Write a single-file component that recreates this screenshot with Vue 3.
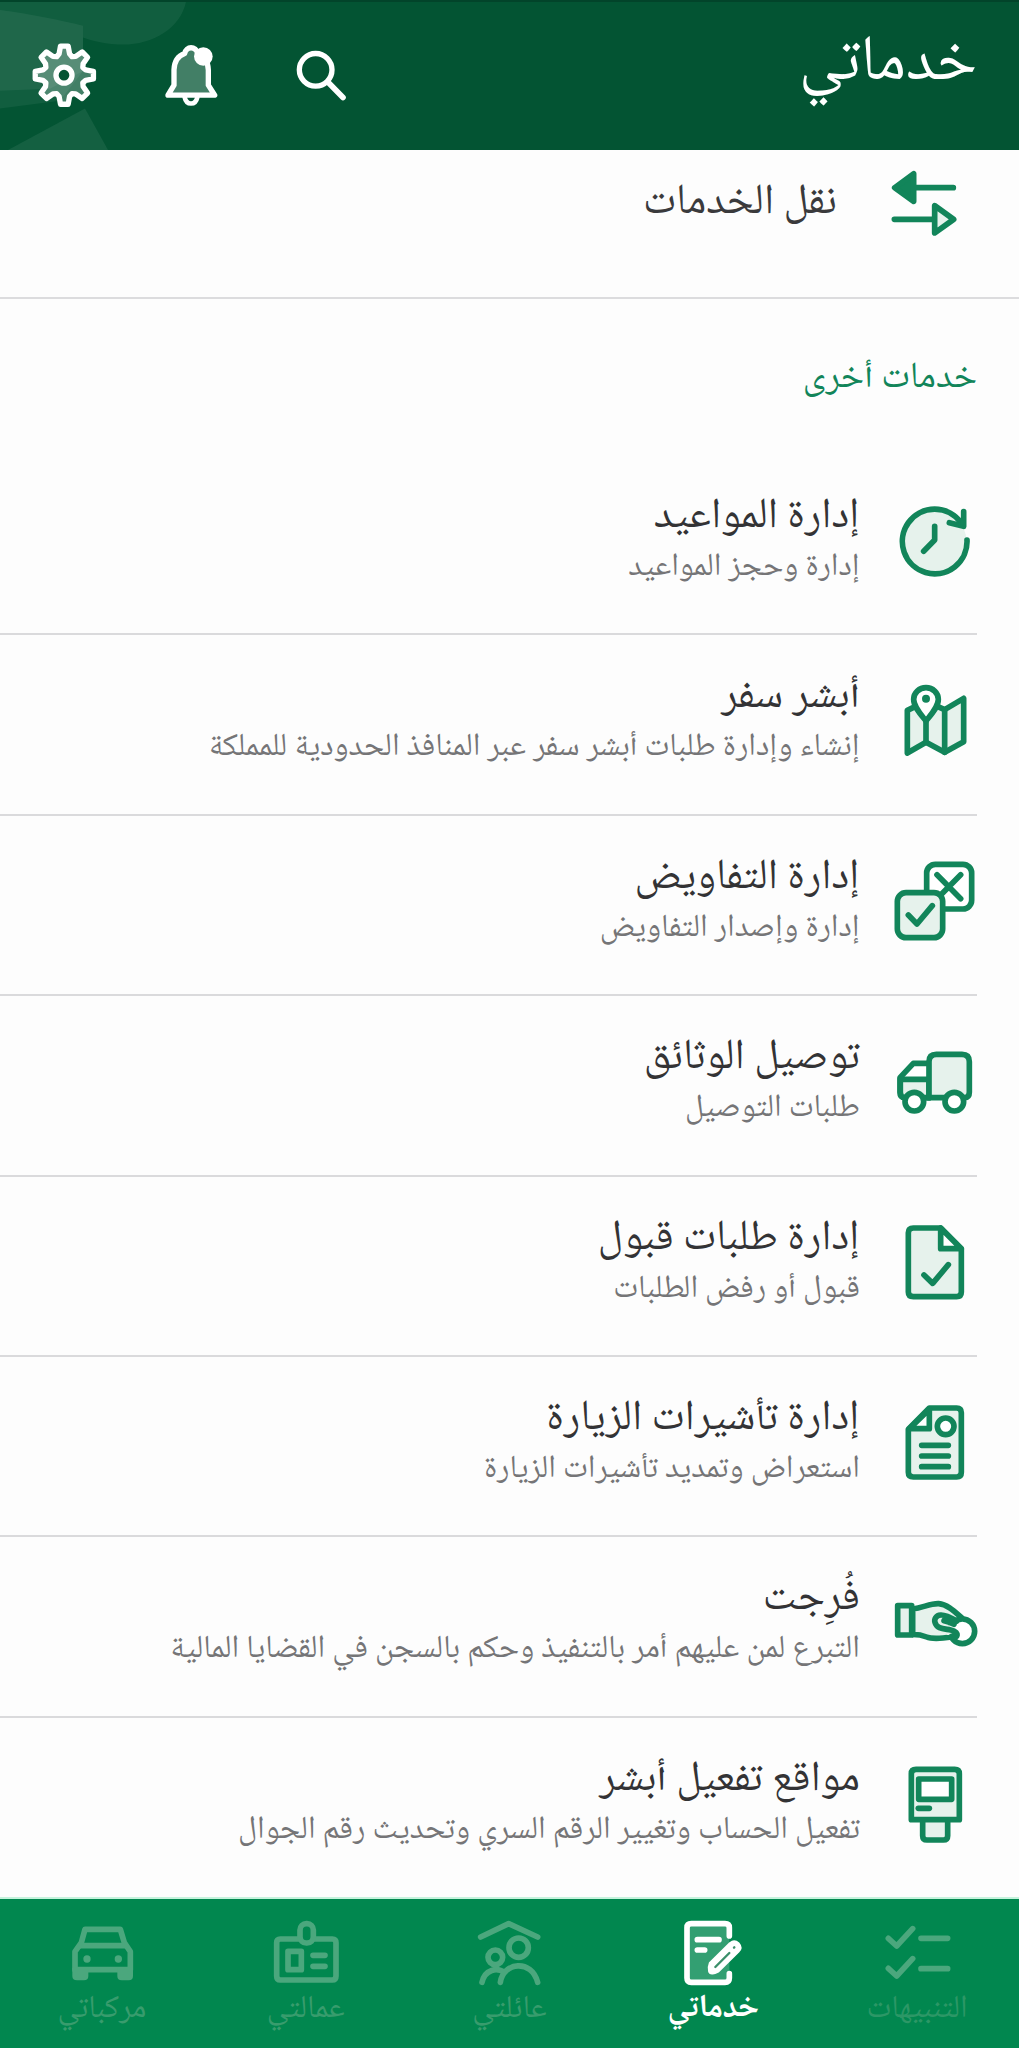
<template>
  <div class="app" dir="rtl">
    <header class="topbar">
      <svg class="topbar-pattern" viewBox="0 0 400 150" preserveAspectRatio="none">
        <path d="M0 0H186C180 28 150 45 118 43 100 42 88 38 83 36V70L60 100 0 108Z" fill="#fff" opacity=".06" />
        <path d="M0 8C30 12 60 18 83 24V70L50 88 0 90Z" fill="#fff" opacity=".06" />
        <path d="M8 150L85 108 108 150Z" fill="#fff" opacity=".07" />
      </svg>
      <h1>خدماتي</h1>
      <div class="topbar-actions">
        <svg viewBox="855 110 180 230" class="ic-action" v-html="icons.search"></svg>
        <svg viewBox="481 110 180 230" class="ic-action" v-html="icons.bell"></svg>
        <svg viewBox="99 110 180 230" class="ic-action" v-html="icons.gear"></svg>
      </div>
    </header>

    <main>
      <section class="transfer">
        <svg class="transfer-icon" viewBox="770 470 270 270" v-html="icons.transfer"></svg>
        <span>نقل الخدمات</span>
      </section>

      <h2>خدمات أخرى</h2>

      <ul class="services">
        <li v-for="s in services" :key="s.title">
          <svg class="service-icon" :viewBox="s.box" v-html="icons[s.icon]"></svg>
          <div class="service-text">
            <h3>{{ s.title }}</h3>
            <p>{{ s.desc }}</p>
          </div>
        </li>
      </ul>
    </main>

    <nav class="tabs">
      <a v-for="t in tabs" :key="t.label" class="tab" :class="{ active: t.active, dim: t.dim }">
        <svg :viewBox="t.box" v-html="icons[t.icon]"></svg>
        <span>{{ t.label }}</span>
      </a>
    </nav>
  </div>
</template>

<script setup>
const services = [
  { icon: 'clock', box: '870 108 270 270', title: 'إدارة المواعيد', desc: 'إدارة وحجز المواعيد' },
  { icon: 'map', box: '870 649 270 270', title: 'أبشر سفر', desc: 'إنشاء وإدارة طلبات أبشر سفر عبر المنافذ الحدودية للمملكة' },
  { icon: 'boxes', box: '900 110 270 270', title: 'إدارة التفاويض', desc: 'إدارة وإصدار التفاويض' },
  { icon: 'truck', box: '900 652 270 270', title: 'توصيل الوثائق', desc: 'طلبات التوصيل' },
  { icon: 'docCheck', box: '900 113 270 270', title: 'إدارة طلبات قبول', desc: 'قبول أو رفض الطلبات' },
  { icon: 'visa', box: '900 654 270 270', title: 'إدارة تأشيرات الزيارة', desc: 'استعراض وتمديد تأشيرات الزيارة' },
  { icon: 'hand', box: '900 115 270 270', title: 'فُرِجت', desc: 'التبرع لمن عليهم أمر بالتنفيذ وحكم بالسجن في القضايا المالية' },
  { icon: 'kiosk', box: '900 656 270 270', title: 'مواقع تفعيل أبشر', desc: 'تفعيل الحساب وتغيير الرقم السري وتحديث رقم الجوال' },
]

const tabs = [
  { icon: 'alerts', box: '1101 110 240 210', label: 'التنبيهات', dim: true },
  { icon: 'notes', box: '490 110 240 210', label: 'خدماتي', active: true },
  { icon: 'family', box: '30 50 240 210', label: 'عائلتي' },
  { icon: 'badge', box: '797 110 240 210', label: 'عمالتي' },
  { icon: 'car', box: '186 110 240 210', label: 'مركباتي' },
]

// eight rounded teeth around the centre
const gearPath = () => {
  const pts = []
  for (let i = 0; i < 8; i++) {
    const a = (i * Math.PI) / 4 - Math.PI / 2
    for (const [r, d] of [[88, -0.13], [88, 0.13], [66, 0.24], [60, 0.393], [66, 0.545]]) {
      pts.push(`${(193 + r * Math.cos(a + d)).toFixed(1)} ${(224 + r * Math.sin(a + d)).toFixed(1)}`)
    }
  }
  return `M${pts.join('L')}Z`
}

const tint = '#e6f2ec'

const icons = {
  gear: `<path d="${gearPath()}" fill="#fff" fill-opacity=".25" stroke-width="16"/><circle cx="192" cy="224" r="24" fill="#035433" stroke-width="16"/>`,
  bell: `<path d="M508 284L526 254V208C527 180 541 165 558 159 562 136 592 136 597 159 616 166 628 183 629 208V254L648 284Z" fill="#fff" fill-opacity=".25" stroke-width="16"/><path d="M558 290Q562 309 577 309 592 309 596 290" stroke-width="14"/><circle cx="614" cy="168" r="28" fill="#fff" stroke="none"/>`,
  search: `<circle cx="947" cy="208" r="49" stroke-width="16"/><path d="M985 246L1029 291" stroke-width="17"/>`,
  transfer: `<path d="M880 562H999M822 657H940"/><path d="M823 562L880 520V603Z" fill="currentColor"/><path d="M943 616V698L1000 657Z" fill="${tint}"/>`,
  clock: `<circle cx="1003" cy="243" r="96" fill="${tint}" stroke="none"/><path d="M1101 240A97 97 0 1 1 1083 188"/><path d="M1048 188L1091 199V155"/><path d="M1072 192L1093 172V200Z" fill="currentColor" stroke-width="4"/><path d="M1004 199V240L971 274"/>`,
  map: `<path d="M922 752L978 725 1034 750 1091 716V846L1034 878 978 848 922 880Z" fill="${tint}"/><path d="M978 785V848M1034 750V878"/><path d="M978 784C962 764 941 742 941 719A37 35 0 0 1 1015 719C1015 742 994 764 978 784Z" fill="#fff"/><circle cx="978" cy="717" r="12" fill="currentColor" stroke="none"/>`,
  boxes: `<rect x="1010" y="132" width="135" height="134" rx="26" fill="#fff"/><path d="M1041 163L1112 235M1112 163L1041 235"/><rect x="922" y="217" width="136" height="135" rx="26" fill="${tint}"/><path d="M955 284L981 311 1027 256"/>`,
  truck: `<path d="M1017 731H970L930 774V818Q930 834 945 834H1017" fill="#fff"/><path d="M931 779H1017V834H945Q931 834 931 818Z" fill="${tint}"/><path d="M1017 834V726Q1017 704 1039 704H1116Q1138 704 1138 726V818Q1138 834 1124 834Z" fill="${tint}"/><circle cx="973" cy="846" r="28" fill="#fff"/><circle cx="1093" cy="846" r="28" fill="#fff"/>`,
  docCheck: `<path d="M1052 143H970Q955 143 955 157V335Q955 349 970 349H1100Q1114 349 1114 335V205Z" fill="${tint}"/><path d="M1052 143V205H1114Z" fill="#fff"/><path d="M1002 284L1028 309 1075 253"/>`,
  visa: `<path d="M1018 684H1100Q1114 684 1114 698V877Q1114 891 1100 891H970Q955 891 955 877V748Z" fill="${tint}"/><path d="M1018 688V746H958Z" fill="#fff"/><circle cx="1067" cy="739" r="25" fill="#fff"/><path d="M995 796H1075M995 828H1075M995 860H1075"/>`,
  hand: `<path d="M968 208C1000 204 1020 191 1046 192 1072 194 1094 216 1117 236L1110 276 1085 292C1050 297 1022 297 1010 292 996 286 986 284 968 284Z" fill="${tint}"/><circle cx="1117" cy="275" r="37" fill="#fff"/><path d="M1082 250L1098 272 1094 286H1070V262Z" fill="${tint}" stroke="none"/><path d="M1100 244C1078 231 1066 225 1052 226 1038 227 1032 238 1035 248 1040 268 1062 267 1082 271 1097 274 1104 282 1100 290H1085M1062 243C1072 245 1080 248 1092 254"/><rect x="923" y="198" width="42" height="88" fill="${tint}"/>`,
  kiosk: `<path d="M998 840V886Q998 899 1011 899H1060Q1073 899 1073 886V840" fill="${tint}"/><path d="M978 687H1094Q1108 687 1108 700V838H964V700Q964 687 978 687Z" fill="${tint}"/><rect x="986" y="716" width="99" height="61" fill="#fff"/><path d="M985 804H1018"/>`,
  alerts: `<path d="M1135 174L1160 197 1208 145M1135 264L1160 287 1208 235M1233 174H1313M1233 265H1313"/>`,
  notes: `<path d="M659 167V142Q659 130 646 130H545Q532 130 532 142V293Q532 306 545 306H646Q659 306 659 293V280" fill="#fff" fill-opacity=".2" stroke-width="17"/><path d="M563 178H628M563 209H585"/><path d="M604 250L664 191Q674 183 684 192 693 202 684 211L624 270Q604 280 602 272 599 262 604 250Z" fill="#fff" stroke-width="14"/><path d="M617 260L659 218M673 202L674 201" stroke="#3b8f6a" stroke-width="7"/>`,
  family: `<path d="M62 110L146 70 233 110" /><circle cx="176" cy="142" r="29"/><circle cx="106" cy="171" r="22"/><path d="M66 246C75 207 112 200 133 217M121 246C130 185 215 175 233 246"/>`,
  badge: `<path d="M898 176H840Q829 176 829 187V287Q829 299 840 299H996Q1007 299 1007 287V187Q1007 176 996 176H942"/><rect x="899" y="130" width="40" height="58" rx="19"/><rect x="863" y="213" width="40" height="55"/><path d="M938 225H974M938 258H974"/>`,
  car: `<path d="M225 268V214L244 187 255 147H361L373 187 391 214V268Z"/><path d="M242 196H376"/><circle cx="261" cy="236" r="11" fill="currentColor" stroke="none"/><circle cx="355" cy="236" r="11" fill="currentColor" stroke="none"/><path d="M217 262H265V287Q265 300 252 300H231Q217 300 217 287ZM352 262H399V287Q399 300 386 300H365Q352 300 352 287Z" fill="currentColor" stroke="none"/>`,
}
</script>

<style>
body {
  background: #fdfdfd;
}
</style>

<style scoped>
.app {
  width: 1019px;
  height: 2048px;
  display: flex;
  flex-direction: column;
  overflow: hidden;
  background: #fdfdfd;
  font-family: "Noto Naskh Arabic UI", "Noto Naskh Arabic", "Noto Sans", sans-serif;
}
h1, h2, h3, p, ul {
  margin: 0;
  padding: 0;
  font-weight: 400;
}
svg {
  flex: none;
  fill: none;
  stroke: currentColor;
  stroke-width: 17;
  stroke-linecap: round;
  stroke-linejoin: round;
}

.topbar {
  position: relative;
  box-sizing: border-box;
  height: 150px;
  flex: none;
  display: flex;
  justify-content: space-between;
  padding: 0 42px 0 33px;
  background: #035433;
  border-top: 2px solid #02442a;
  color: #fff;
}
.topbar-pattern {
  position: absolute;
  left: 0;
  top: 0;
  width: 400px;
  height: 148px;
  stroke: none;
}
.topbar h1 {
  font-size: 64px;
  line-height: 123px;
}
.topbar-actions {
  position: relative;
  display: flex;
  align-items: flex-start;
  gap: 66px;
  padding-top: 35px;
}
.ic-action {
  width: 60px;
  height: 77px;
  overflow: visible;
}

.transfer {
  box-sizing: border-box;
  height: 149px;
  display: flex;
  align-items: flex-start;
  padding: 7px 52px 0 0;
  border-bottom: 2px solid #dcdcde;
  color: #3a3a3c;
}
.transfer span {
  margin-right: 40px;
  font-size: 42.7px;
  line-height: 92px;
}
.transfer-icon,
.service-icon {
  width: 90px;
  height: 90px;
  color: #12855a;
}

h2 {
  height: 156px;
  padding-right: 42px;
  font-size: 37px;
  line-height: 158px;
  color: #12855a;
}

.services {
  list-style: none;
}
.services li {
  box-sizing: border-box;
  height: 180.4px;
  margin-right: 42px;
  display: flex;
  align-items: flex-start;
  border-bottom: 2px solid #dadadc;
}
.services li:last-child {
  border-bottom: 0;
}
.service-icon {
  margin: 41px -3px 0 0;
}
.service-text {
  margin-right: 30px;
  padding-top: 32px;
}
h3 {
  font-size: 42.7px;
  line-height: 60px;
  color: #333335;
}
.service-text p {
  margin-top: -1px;
  font-size: 32.1px;
  line-height: 42px;
  color: #757577;
  white-space: nowrap;
}

.tabs {
  position: absolute;
  left: 0;
  top: 1899px;
  width: 1019px;
  height: 149px;
  display: flex;
  background: #01874f;
  box-shadow: 0 -2px 0 #c4f3dc;
}
.tab {
  flex: 1;
  display: flex;
  flex-direction: column;
  align-items: center;
  padding-top: 18px;
  color: #4ba77d;
}
.tab svg {
  width: 80px;
  height: 70px;
}
.tab span {
  font-size: 32px;
  line-height: 44px;
  color: #389c6d;
}
.tab.dim span {
  color: #2c9766;
}
.tab.active,
.tab.active span {
  color: #fff;
  font-weight: 700;
}
</style>
